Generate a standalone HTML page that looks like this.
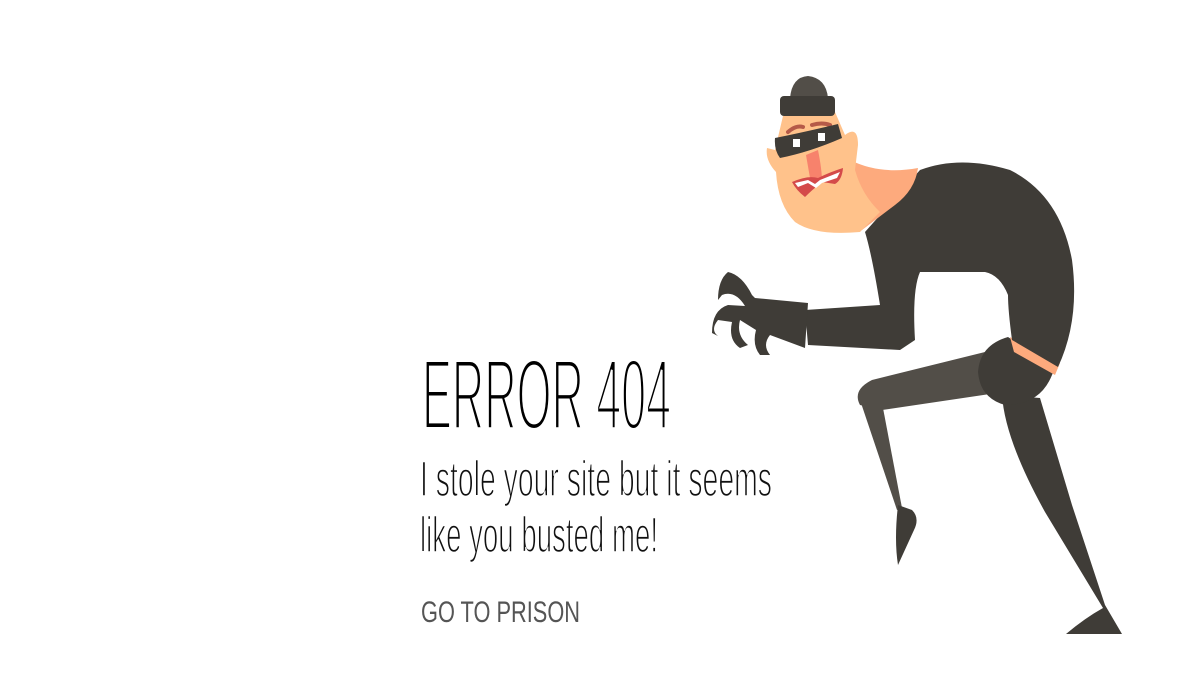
<!DOCTYPE html>
<html><head><meta charset="utf-8"><style>
html,body{margin:0;padding:0;background:#fff;width:1200px;height:680px;overflow:hidden}
svg{display:block}
</style></head><body>
<svg width="1200" height="680" viewBox="0 0 1200 680" xmlns="http://www.w3.org/2000/svg">
<g font-family="Liberation Sans, sans-serif">
<text x="422" y="429" font-size="100" fill="#000" stroke="#fff" stroke-width="4" textLength="249" lengthAdjust="spacingAndGlyphs">ERROR 404</text>
<text x="420" y="496" font-size="50" fill="#111" stroke="#fff" stroke-width="1.6" textLength="352" lengthAdjust="spacingAndGlyphs">I stole your site but it seems</text>
<text x="420" y="552" font-size="50" fill="#111" stroke="#fff" stroke-width="1.6" textLength="238" lengthAdjust="spacingAndGlyphs">like you busted me!</text>
<text x="421" y="622" font-size="30" fill="#555" textLength="159" lengthAdjust="spacingAndGlyphs">GO TO PRISON</text>
</g>
<!-- back leg -->
<path d="M985 352 L872 380 Q852 390 860 405 L882 410 L990 394 Z" fill="#524e48"/>
<path d="M860 400 L883 408 L902 508 L897 510 Z" fill="#524e48"/>
<path d="M898 505 L912 510 Q920 518 914 530 L898 565 Q894 540 898 505 Z" fill="#3f3c37"/>
<!-- front leg -->
<path d="M1002 395 L1040 398 L1072 505 L1105 605 L1122 634 L1066 634 Q1085 618 1103 608 L1045 512 Q1005 440 1002 395 Z" fill="#3f3c37"/>
<!-- hips -->
<path d="M1008 337 Q980 345 978 372 Q980 398 1005 405 Q1040 405 1052 375 L1055 368 Z" fill="#3f3c37"/>
<path d="M1010 337 L1060 363 L1055 375 L1014 352 Z" fill="#fdaa7d"/>
<!-- torso -->
<path d="M865 232 L920 170 Q960 155 1010 170 Q1060 195 1072 260 Q1080 320 1058 367 L1012 340 Q1008 310 1008 295 Q1000 275 985 272 L920 272 Q912 290 915 340 L900 350 L808 345 L805 310 L880 305 Q872 255 865 232 Z" fill="#3f3c37"/>
<!-- glove -->
<path d="M755 298 L808 303 L805 348 L770 335 Q762 345 770 355 L760 355 Q752 345 756 330 L740 320 Q736 335 748 345 L740 348 Q728 340 732 322 L718 320 Q710 330 718 336 L712 333 Q712 310 728 305 L745 306 Q735 290 722 295 L718 300 Q718 280 728 272 Q742 275 752 295 Z" fill="#3f3c37"/>
<!-- neck darker skin -->
<path d="M850 160 Q880 175 918 168 Q915 190 895 205 L862 230 L845 215 Z" fill="#fdaa7d"/>
<!-- face -->
<path d="M783 116 L835 112 L845 135 Q858 125 858 145 L855 170 Q862 195 880 212 L860 232 Q815 236 795 222 Q778 205 776 172 Q765 160 767 148 L775 150 Z" fill="#ffc28b"/>
<!-- hat -->
<path d="M790 98 Q792 77 808 76 Q826 78 828 98 Z" fill="#524e48"/>
<rect x="780" y="96" width="55" height="20" rx="4" fill="#3f3c37"/>
<!-- brows -->
<path d="M788 132 Q796 125 803 127" stroke="#b55a48" stroke-width="4" fill="none" stroke-linecap="round"/>
<path d="M812 125 Q822 122 830 125" stroke="#b55a48" stroke-width="4" fill="none" stroke-linecap="round"/>
<!-- mask -->
<path d="M775 138 Q805 132 838 124 L842 138 Q810 152 780 158 Q774 150 775 138 Z" fill="#3f3c37"/>
<rect x="793" y="139" width="7" height="8" fill="#fff"/>
<rect x="818" y="133" width="7" height="8" fill="#fff"/>
<!-- nose -->
<path d="M806 155 L818 150 Q822 170 822 182 Q814 186 810 178 Z" fill="#f7826c"/>
<!-- mouth -->
<path d="M792 182 Q808 175 818 178 Q830 172 843 168 Q842 180 835 184 L822 182 Q812 190 805 197 Q796 190 792 182 Z" fill="#d44a4a"/>
<path d="M795 183 L808 180 L815 184 L820 180 L840 172 L837 178 L822 183 L816 188 L808 183 L798 187 Z" fill="#fff"/>
</svg>
</body></html>
